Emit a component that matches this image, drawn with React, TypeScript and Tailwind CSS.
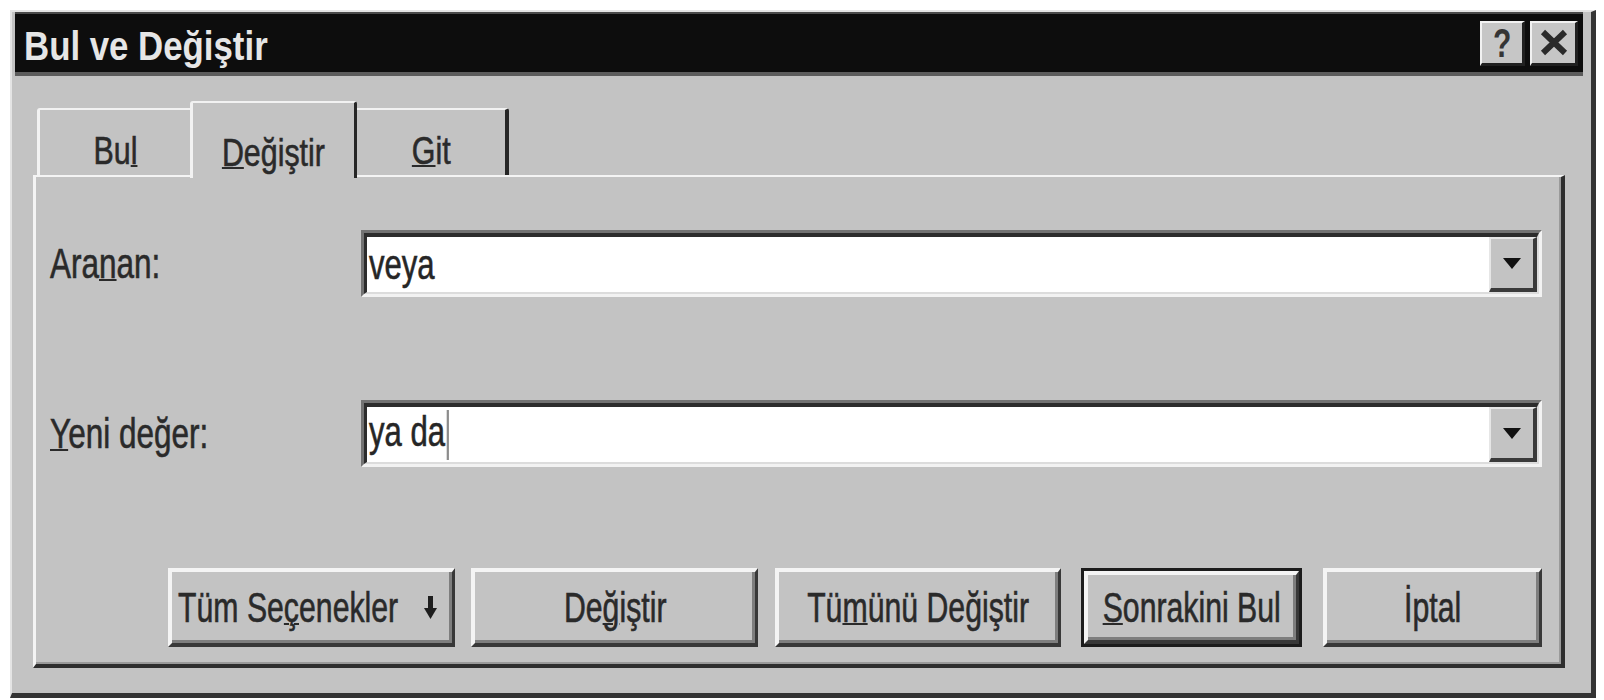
import type { ReactNode } from 'react';

function PushButton({
  children,
  className,
  isDefault = false,
}: {
  children: ReactNode;
  className: string;
  isDefault?: boolean;
}) {
  const face = (
    <div className="flex h-full w-full items-center justify-center border-t-[4px] border-l-[4px] border-r-[3px] border-b-[4px] border-t-[#f4f4f4] border-l-[#f4f4f4] border-r-[#383838] border-b-[#383838] bg-[#c3c3c3] shadow-[inset_-3px_-3px_0_#7e7e7e]">
      {children}
    </div>
  );

  if (isDefault) {
    return (
      <div className={`h-[79px] border-t-[3px] border-l-[3px] border-r-[3px] border-b-[3px] border-[#1c1c1c] ${className}`}>
        {face}
      </div>
    );
  }
  return <div className={`h-[79px] ${className}`}>{face}</div>;
}

function ComboField({ value, caret = false }: { value: string; caret?: boolean }) {
  return (
    <div className="flex h-[67px] flex-1 border-t-[3px] border-l-[3px] border-b-[3px] border-r-[3px] border-t-[#727272] border-l-[#727272] border-b-[#f2f2f2] border-r-[#f2f2f2]">
      <div className="flex flex-1 border-t-[4px] border-l-[3px] border-b-2 border-r-2 border-t-[#2c2c2c] border-l-[#2c2c2c] border-b-[#dcdcdc] border-r-[#dcdcdc] bg-white">
        <div className="flex flex-1 items-center pl-[2px]">
          <span className="inline-block origin-left scale-x-[0.74] whitespace-nowrap text-[42px] leading-none text-[#262626] [-webkit-text-stroke:0.6px_#262626]">
            {value}
            {caret && <span className="ml-[2px] inline-block h-[50px] w-[3px] bg-[#8c8c8c] align-middle" />}
          </span>
        </div>
        <div className="flex w-[48px] items-center justify-center border-t-2 border-l-2 border-r-[4px] border-b-[4px] border-t-[#e6e6e6] border-l-[#e6e6e6] border-r-[#3a3a3a] border-b-[#3a3a3a] bg-[#c3c3c3]">
          <svg width="18" height="12" viewBox="0 0 18 12">
            <polygon points="0,0 18,0 9,11" fill="#111" />
          </svg>
        </div>
      </div>
    </div>
  );
}

export default function App() {
  return (
    <div className="h-[700px] w-[1604px] overflow-hidden bg-white pl-[10px] pt-[10px] font-['Liberation_Sans',Arial,sans-serif]">
      <div className="flex h-[688px] w-[1586px] flex-col border-t-2 border-l-2 border-r-[5px] border-b-[5px] border-t-[#e4e4e4] border-l-[#e4e4e4] border-r-[#343434] border-b-[#343434] bg-[#c3c3c3]">
        {/* Caption bar */}
        <div className="ml-[3px] mr-[8px] flex h-[64px] items-center justify-between border-t-2 border-b-4 border-t-[#4a4a4a] border-b-[#5c5c5c] bg-[#0d0d0d] pl-[9px] pr-[5px]">
          <span className="inline-block origin-left scale-x-[0.87] whitespace-nowrap pt-[6px] text-[40px] font-bold leading-none text-[#e6e6e6]">
            Bul ve Değiştir
          </span>
          <div className="flex gap-[5px]">
            <div className="flex h-[45px] w-[45px] items-center justify-center border-t-2 border-l-2 border-r-[3px] border-b-[3px] border-t-[#f2f2f2] border-l-[#f2f2f2] border-r-[#202020] border-b-[#202020] bg-[#c6c6c6]">
              <span className="inline-block scale-x-[0.75] text-[40px] font-bold leading-none text-[#353535]">?</span>
            </div>
            <div className="flex h-[45px] w-[48px] items-center justify-center border-t-2 border-l-2 border-r-[3px] border-b-[3px] border-t-[#f2f2f2] border-l-[#f2f2f2] border-r-[#202020] border-b-[#202020] bg-[#c6c6c6]">
              <svg width="28" height="27" viewBox="0 0 28 27">
                <path d="M3 3 L25 24 M25 3 L3 24" stroke="#2a2a2a" strokeWidth="6" />
              </svg>
            </div>
          </div>
        </div>

        {/* Tabs */}
        <div className="ml-[25px] mt-[25px] flex h-[74px] items-end">
          <div className="flex h-[67px] w-[153px] items-center justify-center rounded-tl-[3px] border-t-2 border-l-[3px] border-t-[#f2f2f2] border-l-[#f2f2f2] pt-[16px]">
            <span className="inline-block scale-x-[0.8] whitespace-nowrap text-[38px] leading-none text-[#2a2a2a] [-webkit-text-stroke:0.6px_#2a2a2a]">
              Bu<u className="decoration-2">l</u>
            </span>
          </div>
          <div className="relative z-10 -mb-[3px] flex h-[77px] w-[167px] items-center justify-center rounded-t-[3px] border-t-2 border-l-[3px] border-r-[3px] border-t-[#f2f2f2] border-l-[#f2f2f2] border-r-[#262626] bg-[#c3c3c3] pt-[24px]">
            <span className="inline-block scale-x-[0.8] whitespace-nowrap text-[38px] leading-none text-[#2a2a2a] [-webkit-text-stroke:0.6px_#2a2a2a]">
              <u className="decoration-2">D</u>eğiştir
            </span>
          </div>
          <div className="flex h-[67px] w-[152px] items-center justify-center rounded-tr-[3px] border-t-2 border-r-[4px] border-t-[#f2f2f2] border-r-[#262626] pt-[16px]">
            <span className="inline-block scale-x-[0.8] whitespace-nowrap text-[38px] leading-none text-[#2a2a2a] [-webkit-text-stroke:0.6px_#2a2a2a]">
              <u className="decoration-2">G</u>it
            </span>
          </div>
        </div>

        {/* Tab page */}
        <div className="ml-[21px] flex h-[493px] w-[1532px] flex-col border-t-2 border-l-[3px] border-r-[4px] border-b-[4px] border-t-[#f4f4f4] border-l-[#f4f4f4] border-r-[#2e2e2e] border-b-[#2e2e2e] pl-[14px] pr-[19px] shadow-[inset_-2px_-2px_0_#9a9a9a]">
          <div className="mt-[53px] flex items-center">
            <div className="w-[311px]">
              <span className="inline-block origin-left scale-x-[0.75] whitespace-nowrap text-[42px] leading-none text-[#2a2a2a] [-webkit-text-stroke:0.6px_#2a2a2a]">
                Ara<u className="decoration-2">n</u>an:
              </span>
            </div>
            <ComboField value="veya" />
          </div>

          <div className="mt-[103px] flex items-center">
            <div className="w-[311px]">
              <span className="inline-block origin-left scale-x-[0.75] whitespace-nowrap text-[42px] leading-none text-[#2a2a2a] [-webkit-text-stroke:0.6px_#2a2a2a]">
                <u className="decoration-2">Y</u>eni değer:
              </span>
            </div>
            <ComboField value="ya da" caret />
          </div>

          <div className="mt-[101px] flex justify-end">
            <PushButton className="w-[287px]">
              <div className="flex w-full items-center justify-between pl-[6px] pr-[15px]">
                <div className="w-[222px]">
                  <span className="inline-block origin-left scale-x-[0.72] whitespace-nowrap text-[42px] leading-none text-[#2a2a2a] [-webkit-text-stroke:0.6px_#2a2a2a]">
                    Tüm Se<u className="decoration-2">ç</u>enekler
                  </span>
                </div>
                <svg className="shrink-0" width="13" height="24" viewBox="0 0 13 24">
                  <rect x="4" y="0" width="5" height="14" fill="#1e1e1e" />
                  <polygon points="0,12 13,12 6.5,23" fill="#1e1e1e" />
                </svg>
              </div>
            </PushButton>
            <PushButton className="ml-[16px] w-[287px]">
              <span className="inline-block scale-x-[0.72] whitespace-nowrap text-[42px] leading-none text-[#2a2a2a] [-webkit-text-stroke:0.6px_#2a2a2a]">
                De<u className="decoration-2">ğ</u>iştir
              </span>
            </PushButton>
            <PushButton className="ml-[17px] w-[286px]">
              <span className="inline-block scale-x-[0.72] whitespace-nowrap text-[42px] leading-none text-[#2a2a2a] [-webkit-text-stroke:0.6px_#2a2a2a]">
                Tü<u className="decoration-2">m</u>ünü Değiştir
              </span>
            </PushButton>
            <PushButton className="ml-[20px] w-[221px]" isDefault>
              <span className="inline-block scale-x-[0.72] whitespace-nowrap text-[42px] leading-none text-[#2a2a2a] [-webkit-text-stroke:0.6px_#2a2a2a]">
                <u className="decoration-2">S</u>onrakini Bul
              </span>
            </PushButton>
            <PushButton className="ml-[21px] w-[219px]">
              <span className="inline-block scale-x-[0.72] whitespace-nowrap text-[42px] leading-none text-[#2a2a2a] [-webkit-text-stroke:0.6px_#2a2a2a]">
                İptal
              </span>
            </PushButton>
          </div>
        </div>
      </div>
    </div>
  );
}
